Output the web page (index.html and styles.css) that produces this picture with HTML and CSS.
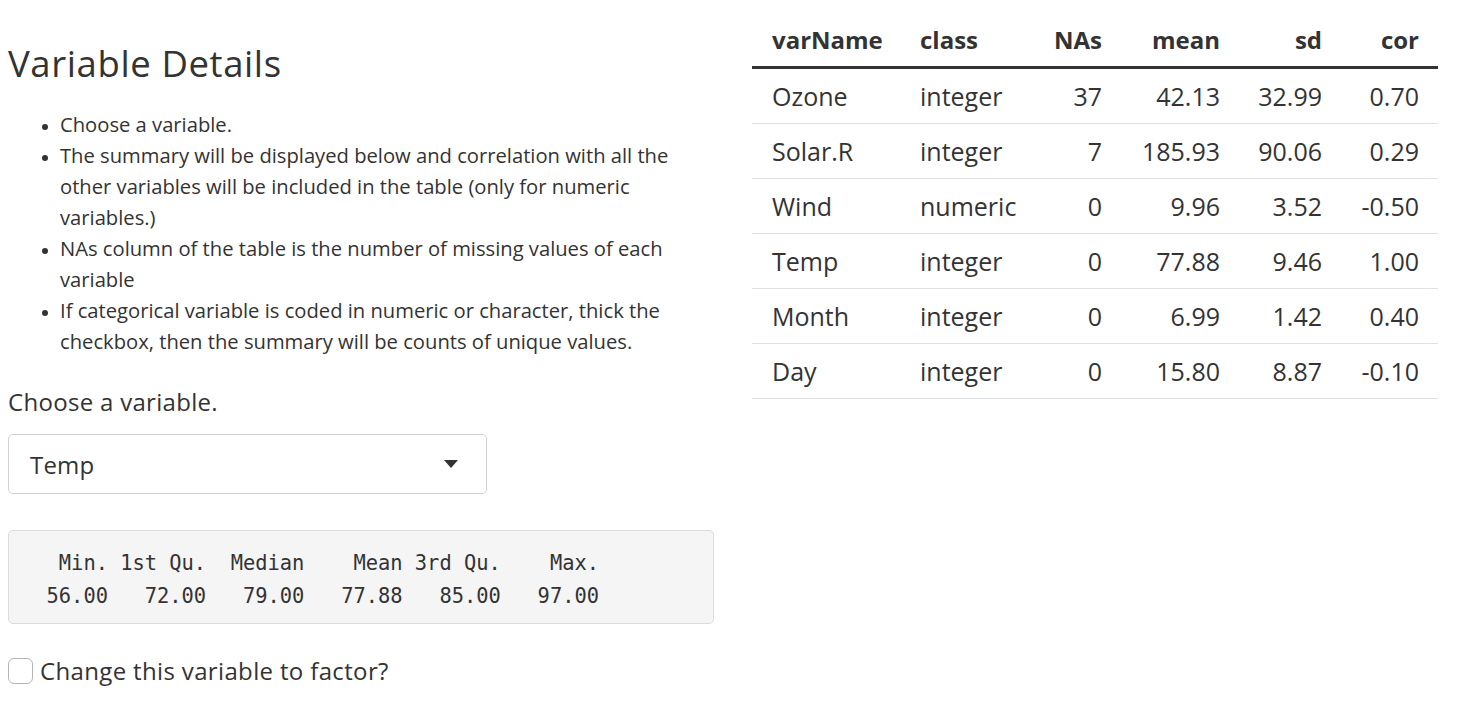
FILE: index.html
```html
<!DOCTYPE html>
<html lang="en">
<head>
<meta charset="utf-8">
<title>Variable Details</title>
<link rel="stylesheet" href="styles.css">
</head>
<body>
<div class="page">
  <section class="left">
    <h2 class="title">Variable Details</h2>
    <ul class="notes">
      <li>Choose a variable.</li>
      <li>The summary will be displayed below and correlation with all the other variables will be included in the table (only for numeric variables.)</li>
      <li>NAs column of the table is the number of missing values of each variable</li>
      <li>If categorical variable is coded in numeric or character, thick the checkbox, then the summary will be counts of unique values.</li>
    </ul>
    <label class="field-label" for="var">Choose a variable.</label>
    <div class="select">
      <span class="select-value">Temp</span>
      <svg class="caret" width="14" height="8" viewBox="0 0 14 8"><path d="M0 0 H14 L7 8 Z" fill="#333"/></svg>
    </div>
    <pre class="summary">   Min. 1st Qu.  Median    Mean 3rd Qu.    Max. 
  56.00   72.00   79.00   77.88   85.00   97.00 </pre>
    <label class="check">
      <span class="box"></span>
      <span>Change this variable to factor?</span>
    </label>
  </section>
  <section class="right">
    <table class="vars">
      <colgroup>
        <col class="c1"><col class="c2"><col class="c3"><col class="c4"><col class="c5"><col class="c6">
      </colgroup>
      <thead>
        <tr><th>varName</th><th>class</th><th class="num">NAs</th><th class="num">mean</th><th class="num">sd</th><th class="num">cor</th></tr>
      </thead>
      <tbody>
        <tr><td>Ozone</td><td>integer</td><td class="num">37</td><td class="num">42.13</td><td class="num">32.99</td><td class="num">0.70</td></tr>
        <tr><td>Solar.R</td><td>integer</td><td class="num">7</td><td class="num">185.93</td><td class="num">90.06</td><td class="num">0.29</td></tr>
        <tr><td>Wind</td><td>numeric</td><td class="num">0</td><td class="num">9.96</td><td class="num">3.52</td><td class="num">-0.50</td></tr>
        <tr><td>Temp</td><td>integer</td><td class="num">0</td><td class="num">77.88</td><td class="num">9.46</td><td class="num">1.00</td></tr>
        <tr><td>Month</td><td>integer</td><td class="num">0</td><td class="num">6.99</td><td class="num">1.42</td><td class="num">0.40</td></tr>
        <tr><td>Day</td><td>integer</td><td class="num">0</td><td class="num">15.80</td><td class="num">8.87</td><td class="num">-0.10</td></tr>
      </tbody>
    </table>
  </section>
</div>
</body>
</html>
```
FILE: styles.css
```css
html, body {
  margin: 0;
  padding: 0;
  background: #fff;
}
body {
  font-family: "Open Sans", "Noto Sans", sans-serif;
  color: #333;
}
.page {
  display: grid;
  grid-template-columns: 706px 686px;
  column-gap: 38px;
  padding-left: 8px;
}
.title {
  margin: 41px 0 0 0;
  font-size: 36.5px;
  line-height: 44px;
  font-weight: 400;
  letter-spacing: 0.6px;
}
.notes {
  margin: 24px 0 0 0;
  padding-left: 52px;
  font-size: 20.2px;
  line-height: 31px;
  width: 625px;
}
.notes li::marker {
  font-size: 16px;
}
.field-label {
  display: block;
  margin-top: 29px;
  font-size: 24px;
  line-height: 31px;
  letter-spacing: 0.3px;
}
.select {
  margin-top: 17px;
  width: 479px;
  height: 60px;
  box-sizing: border-box;
  border: 1.5px solid #ced2d7;
  border-radius: 5px;
  display: flex;
  align-items: center;
  justify-content: space-between;
  padding: 0 28px 0 21px;
}
.select-value {
  font-size: 24px;
  letter-spacing: 0.2px;
}
.caret {
  display: block;
}
.summary {
  margin: 36px 0 0 0;
  background: #f5f5f5;
  border: 1.5px solid #dcdcdc;
  border-radius: 5px;
  padding: 16px 13px 10px 13px;
  font-family: "DejaVu Sans Mono", "Liberation Mono", monospace;
  font-size: 20.4px;
  line-height: 33px;
  color: #333;
}
.check {
  margin-top: 32px;
  display: flex;
  align-items: center;
  gap: 7px;
  font-size: 24px;
  line-height: 30px;
  letter-spacing: 0.35px;
}
.box {
  width: 23px;
  height: 24px;
  border: 1.5px solid #b5b5b5;
  border-radius: 6px;
  background: #fff;
}
.vars {
  margin-top: 12px;
  width: 686px;
  table-layout: fixed;
  border-collapse: collapse;
  font-size: 25px;
}
.c1 { width: 148px; }
.c2 { width: 144px; }
.c3 { width: 78px; }
.c4 { width: 118px; }
.c5 { width: 102px; }
.c6 { width: 96px; }
.vars th, .vars td {
  padding: 8px 20px;
  line-height: 38px;
  text-align: left;
  white-space: nowrap;
}
.vars th {
  font-size: 24px;
  font-weight: 700;
  padding-top: 9px;
  padding-bottom: 7px;
  border-bottom: 3px solid #333;
}
.vars td {
  border-bottom: 1px solid #dee2e6;
}
.vars .num {
  text-align: right;
  padding-left: 0;
}
.vars th:last-child, .vars td:last-child {
  padding-right: 19px;
}
```
